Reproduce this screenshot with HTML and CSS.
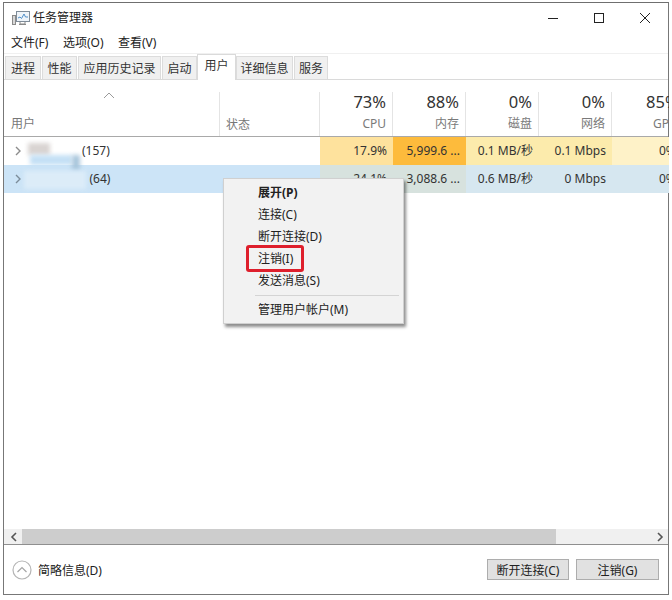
FILE: index.html
```html
<!DOCTYPE html>
<html lang="zh-CN">
<head>
<meta charset="utf-8">
<title>任务管理器</title>
<link rel="stylesheet" href="styles.css">
</head>
<body>
<div class="window">
  <header class="titlebar">
    <svg class="app-icon" width="18" height="16" viewBox="0 0 18 16">
      <rect x="0.5" y="5.5" width="3" height="9" fill="#d8d8d8" stroke="#8a8a8a"/>
      <rect x="4.5" y="1.5" width="13" height="10" fill="#eef4fa" stroke="#7f8c99"/>
      <path d="M6 8l2-1 1.5 1.5L12 4l1.5 3H16" fill="none" stroke="#4f8fc9"/>
      <path d="M8 12v2h5v-2M7 14.5h7" fill="none" stroke="#8a8a8a"/>
    </svg>
    <span class="title">任务管理器</span>
    <div class="controls">
      <svg width="12" height="12" viewBox="0 0 12 12"><path d="M1 6.5h10" stroke="#222" stroke-width="1"/></svg>
      <svg width="12" height="12" viewBox="0 0 12 12"><rect x="1.5" y="1.5" width="9" height="9" fill="none" stroke="#222"/></svg>
      <svg width="12" height="12" viewBox="0 0 12 12"><path d="M1 1l10 10M11 1L1 11" stroke="#222" stroke-width="1"/></svg>
    </div>
  </header>
  <nav class="menubar">
    <span>文件(F)</span><span>选项(O)</span><span>查看(V)</span>
  </nav>
  <div class="tabs">
    <span class="tab t1">进程</span>
    <span class="tab t2">性能</span>
    <span class="tab t3">应用历史记录</span>
    <span class="tab t4">启动</span>
    <span class="tab active">用户</span>
    <span class="tab t6">详细信息</span>
    <span class="tab t7">服务</span>
  </div>
  <div class="content">
    <div class="table">
      <div class="row head">
        <div class="col user">
          <svg class="sort" width="12" height="7" viewBox="0 0 12 7"><path d="M1 6l5-5 5 5" fill="none" stroke="#9a9a9a"/></svg>
          <span class="head-label">用户</span>
        </div>
        <div class="col status"><span class="head-label">状态</span></div>
        <div class="col num"><b>73%</b><span>CPU</span></div>
        <div class="col num"><b>88%</b><span>内存</span></div>
        <div class="col num"><b>0%</b><span>磁盘</span></div>
        <div class="col num"><b>0%</b><span>网络</span></div>
        <div class="col num gpu"><b>85%</b><span>GPU</span></div>
      </div>
      <div class="row data">
        <div class="cell user">
          <svg class="chev" width="7" height="10" viewBox="0 0 7 10"><path d="M1 1l4 4-4 4" fill="none" stroke="#8c8c8c" stroke-width="1.4"/></svg>
          <span class="redact r1"></span><span class="redact r3"></span><span class="redact r4"></span><span class="count">(157)</span>
        </div>
        <div class="cell status"></div>
        <div class="cell val y2">17.9%</div>
        <div class="cell val o">5,999.6 ...</div>
        <div class="cell val y1">0.1 MB/秒</div>
        <div class="cell val y1">0.1 Mbps</div>
        <div class="cell val y0 gpu">0%</div>
      </div>
      <div class="row data selected">
        <div class="cell user">
          <svg class="chev" width="7" height="10" viewBox="0 0 7 10"><path d="M1 1l4 4-4 4" fill="none" stroke="#7c8c99" stroke-width="1.4"/></svg>
          <span class="redact r2"></span><span class="count c2">(64)</span>
        </div>
        <div class="cell status"></div>
        <div class="cell val g">24.1%</div>
        <div class="cell val g">3,088.6 ...</div>
        <div class="cell val b">0.6 MB/秒</div>
        <div class="cell val b">0 Mbps</div>
        <div class="cell val b gpu">0%</div>
      </div>
    </div>
    <div class="context-menu">
      <div class="mi strong">展开(P)</div>
      <div class="mi">连接(C)</div>
      <div class="mi">断开连接(D)</div>
      <div class="mi">注销(I)</div>
      <div class="mi">发送消息(S)</div>
      <div class="sep"></div>
      <div class="mi">管理用户帐户(M)</div>
      <span class="highlight"></span>
    </div>
  </div>
  <div class="hscroll">
    <span class="arrow"><svg width="7" height="10" viewBox="0 0 7 10"><path d="M6 1L2 5l4 4" fill="none" stroke="#555" stroke-width="1.6"/></svg></span>
    <span class="thumb"></span>
    <span class="track"><svg width="7" height="10" viewBox="0 0 7 10"><path d="M1 1l4 4-4 4" fill="none" stroke="#555" stroke-width="1.6"/></svg></span>
  </div>
  <footer class="footer">
    <svg width="20" height="20" viewBox="0 0 20 20"><circle cx="10" cy="10" r="9" fill="#fff" stroke="#b5b5b5" stroke-width="1.2"/><path d="M5.5 12L10 7.5l4.5 4.5" fill="none" stroke="#a5a5a5" stroke-width="1.2"/></svg>
    <span class="fewer">简略信息(D)</span>
    <button class="btn first">断开连接(C)</button>
    <button class="btn">注销(G)</button>
  </footer>
</div>
</body>
</html>
```
FILE: styles.css
```css
* { box-sizing: border-box; }
html, body { margin: 0; background: #fff; }
body {
  width: 672px; height: 600px; overflow: hidden; padding: 2px 3px 5px 3px;
  font-family: "Noto Sans", "Noto Sans CJK SC", sans-serif;
  font-size: 12px; color: #222;
}
.window {
  width: 666px; height: 593px; border: 1px solid #777; border-top-color: #6f6f6f;
  display: flex; flex-direction: column; background: #fff;
}
.titlebar { height: 28px; flex: none; display: flex; align-items: center; padding: 2px 0 0 8px; position: relative; }
.app-icon { margin-right: 3px; }
.title { font-size: 12px; line-height: 16px; }
.controls { margin-left: auto; display: flex; gap: 34px; padding-right: 17px; }
.controls svg { display: block; }
.menubar { height: 23px; flex: none; display: flex; gap: 14.5px; padding: 3px 0 0 7px; line-height: 18px; border-bottom: 1px solid #f0f0f0; }
.tabs {
  height: 26px; flex: none; display: flex; align-items: flex-end; padding-left: 1px;
  background: #fff; border-bottom: 1px solid #dadada; position: relative;
}
.tab {
  height: 23px; background: #f0f0f0; border: 1px solid #dcdcdc; border-bottom: none; margin-right: 1px; padding-top: 2px;
  display: flex; align-items: center; justify-content: center; line-height: 16px; color: #333;
}
.t1 { width: 36px; } .t2 { width: 35px; } .t3 { width: 83px; } .t4 { width: 35px; margin-right: 0; }
.t6 { width: 57px; } .t7 { width: 34px; }
.tab.active {
  width: 39px; height: 26px; margin: 0 0 -1px 0; background: #fff; padding: 0 0 4px 0;
  border-color: #dadada;
}
.content { flex: 1; position: relative; min-height: 0; }
.row { display: flex; }
.col, .cell { flex: none; }
.user { width: 216px; }
.status { width: 100px; }
.num, .val { width: 73px; }
.gpu { width: 57px; overflow: hidden; }
.head { height: 57px; border-bottom: 1px solid #a9a9a9; }
.col { position: relative; border-right: 1px solid #e4e4e4; margin-top: 12px; height: 44px; }
.col.gpu { border-right: none; }
.sort { position: absolute; left: 99px; top: 0; }
.head-label { position: absolute; left: 7px; bottom: 4px; color: #777; line-height: 16px; }
.status .head-label { left: 6px; bottom: 3px; }
.num { text-align: right; padding-right: 6px; display: flex; flex-direction: column; align-items: flex-end; }
.num b { font-weight: 400; font-size: 16.5px; line-height: 24px; color: #333; margin-top: -2px; white-space: nowrap; }
.num span { color: #7a7a7a; line-height: 16px; margin-top: 2px; white-space: nowrap; }
.gpu.num { padding-right: 0; align-items: flex-start; padding-left: 34px; }
.gpu.num span { margin-left: 7px; }
.data { height: 28px; line-height: 28px; }
.cell { position: relative; }
.cell.user { display: flex; align-items: center; }
.chev { margin-left: 11px; }
.count { position: absolute; left: 78px; top: 0; color: #333; }
.count.c2 { left: 85.5px; }
.redact { position: absolute; filter: blur(2px); }
.r1 { left: 24px; top: 6px; width: 22px; height: 12px; background: #d9d4d2; }
.r3 { left: 26px; top: 18px; width: 42px; height: 10px; background: #c4e0f5; }
.r4 { left: 68px; top: 18px; width: 8px; height: 15px; background: #a9c6dc; }
.r2 { left: 20px; top: 6px; width: 62px; height: 18px; background: #dcecf8; }
.val { text-align: right; padding-right: 6px; white-space: nowrap; color: #333; }
.gpu.val { padding-right: 0; text-align: left; padding-left: 47px; }
.y2 { background: #fee29d; }
.o { background: #fdbb3c; }
.y1 { background: #fcebac; }
.y0 { background: #fef2c8; }
.selected { background: #cce4f7; }
.g { background: #d7e2de; }
.b { background: #d6e7f0; }
.context-menu {
  position: absolute; left: 219px; top: 98px; width: 181px; height: 146px;
  background: #f2f2f2; border: 1px solid #d0d0d0;
  box-shadow: 2px 3px 3px rgba(0,0,0,.45); padding: 3px 0 0 0;
}
.mi { height: 22px; line-height: 22px; padding-left: 34px; color: #222; }
.strong { font-weight: 700; }
.sep { height: 1px; background: #d4d4d4; margin: 3px 4px 3px 31px; }
.highlight {
  position: absolute; left: 22px; top: 66px; width: 58px; height: 27px;
  border: 3.5px solid #de1f2c; border-radius: 3px;
}
.hscroll { height: 16px; flex: none; display: flex; border-bottom: 1px solid #8f8f8f; background: #f0f0f0; }
.arrow { width: 18px; display: flex; align-items: center; justify-content: center; }
.thumb { width: 534px; background: #cdcdcd; }
.track { flex: 1; display: flex; align-items: center; justify-content: flex-end; padding-right: 4px; }
.footer { height: 49px; flex: none; display: flex; align-items: center; padding: 0 9px 0 8px; }
.fewer { margin-left: 6px; }
.btn {
  width: 83px; height: 21px; background: #e1e1e1; border: 1px solid #adadad; padding: 0; font: inherit; color: #222; margin-left: 7px;
}
.btn.first { width: 82px; margin-left: auto; }
```
